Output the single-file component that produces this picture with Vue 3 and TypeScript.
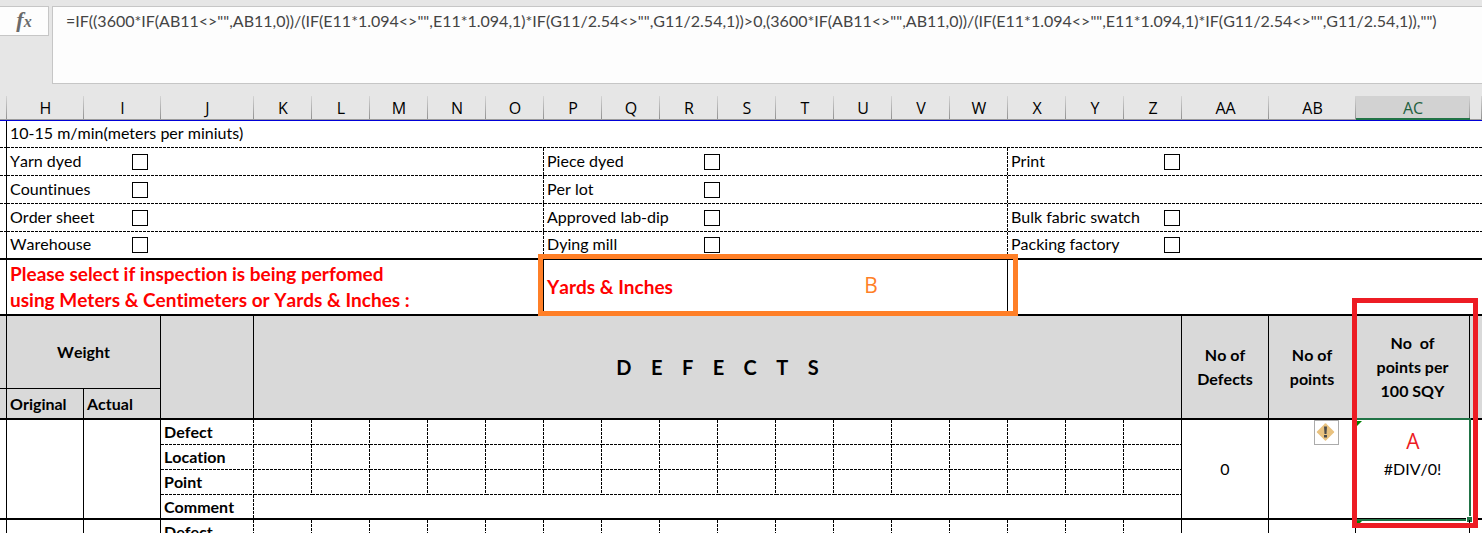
<script setup lang="ts">
interface Option {
  label: string
  checkbox: boolean
}

const formula =
  '=IF((3600*IF(AB11<>"",AB11,0))/(IF(E11*1.094<>"",E11*1.094,1)*IF(G11/2.54<>"",G11/2.54,1))>0,(3600*IF(AB11<>"",AB11,0))/(IF(E11*1.094<>"",E11*1.094,1)*IF(G11/2.54<>"",G11/2.54,1)),"")'

const narrow: string[] = 'KLMNOPQRSTUVWXYZ'.split('')
const columns: string[] = ['', 'H', 'I', 'J', ...narrow, 'AA', 'AB', 'AC', '']
const defectsTitle = 'DEFECTS'.split('').join('    ')
const pointsTitle = 'No  of\npoints per\n100 SQY'

const optionRows: Option[][] = [
  [
    { label: 'Yarn dyed', checkbox: true },
    { label: 'Piece dyed', checkbox: true },
    { label: 'Print', checkbox: true },
  ],
  [
    { label: 'Countinues', checkbox: true },
    { label: 'Per lot', checkbox: true },
    { label: '', checkbox: false },
  ],
  [
    { label: 'Order sheet', checkbox: true },
    { label: 'Approved lab-dip', checkbox: true },
    { label: 'Bulk fabric swatch', checkbox: true },
  ],
  [
    { label: 'Warehouse', checkbox: true },
    { label: 'Dying mill', checkbox: true },
    { label: 'Packing factory', checkbox: true },
  ],
]
const spans: number[] = [8, 8, 7]
</script>

<template>
  <main class="app">
    <header class="formula-bar">
      <button class="fx" type="button" aria-label="Insert function"><i>f</i><i class="x">x</i></button>
      <textarea class="formula" aria-label="Formula" wrap="off" spellcheck="false" :value="formula"></textarea>
    </header>

    <table class="sheet">
      <colgroup>
        <col class="c-edge" />
        <col class="c-weight" />
        <col class="c-weight" />
        <col class="c-name" />
        <col v-for="c in narrow" :key="c" class="c-narrow" />
        <col class="c-count" />
        <col class="c-count" />
        <col class="c-result" />
        <col />
      </colgroup>
      <thead>
        <tr class="letters">
          <th v-for="(c, i) in columns" :key="i" scope="col" :class="{ active: c === 'AC' }">{{ c }}</th>
        </tr>
      </thead>
      <tbody>
        <tr class="speed">
          <td class="db r"></td>
          <td class="db text" colspan="23">10-15 m/min(meters per miniuts)</td>
        </tr>
        <tr v-for="(row, r) in optionRows" :key="r" class="options">
          <td class="r" :class="r === 3 ? 'thick' : 'db'"></td>
          <td
            v-for="(o, i) in row"
            :key="i"
            :colspan="spans[i]"
            :class="[r === 3 ? (i < 2 ? 'thick dr' : 'thick') : i < 2 ? 'dbr' : 'db', 'group' + i]"
          >
            <div v-if="o.label" class="option">
              <label :for="`opt-${r}-${i}`">{{ o.label }}</label>
              <input v-if="o.checkbox" :id="`opt-${r}-${i}`" type="checkbox" />
            </div>
          </td>
        </tr>
        <tr class="units">
          <td class="r thick"></td>
          <td class="r thick question" colspan="8">
            Please select if inspection is being perfomed<br />using Meters &amp; Centimeters or Yards &amp; Inches :
          </td>
          <td class="r thick answer" colspan="8">
            Yards &amp; Inches
            <div class="mark orange"><span>B</span></div>
          </td>
          <td class="thick" colspan="7"></td>
        </tr>
        <tr class="head-top">
          <td class="r b grey"></td>
          <th class="r b grey" colspan="2">Weight</th>
          <td class="r thick grey" rowspan="2"></td>
          <th class="r thick grey defects" colspan="16" rowspan="2">{{ defectsTitle }}</th>
          <th class="r thick grey" rowspan="2">No of<br />Defects</th>
          <th class="r thick grey" rowspan="2">No of<br />points</th>
          <th class="r thick grey spaced" rowspan="2">{{ pointsTitle }}</th>
          <td class="thick grey" rowspan="2"></td>
        </tr>
        <tr class="head-bottom">
          <td class="r thick grey"></td>
          <th class="r thick grey left">Original</th>
          <th class="r thick grey left">Actual</th>
        </tr>
        <tr class="entry">
          <td class="r thick" rowspan="4"></td>
          <td class="r thick" rowspan="4"></td>
          <td class="r thick" rowspan="4"></td>
          <th class="dbr left" scope="row">Defect</th>
          <td v-for="c in narrow" :key="c" :class="c === 'Z' ? 'db r' : 'dbr'"></td>
          <td class="r thick value" rowspan="4">0</td>
          <td class="r thick value" rowspan="4">
            <button class="warning" type="button" aria-label="Error checking">
              <svg viewBox="0 0 23 23" width="23" height="23" aria-hidden="true">
                <path d="M10 2.5Q10.5 2 11 2.5L19 10.5Q19.5 11 19 11.5L11 19.5Q10.5 20 10 19.5L2 11.5Q1.5 11 2 10.5Z" fill="#e9c27f" />
                <path d="M9 5.5h3l-.5 7.5h-2zM9 14h3v2.5H9z" fill="#4b4b4b" />
              </svg>
            </button>
          </td>
          <td class="r thick value selected" rowspan="4">
            #DIV/0!
            <div class="selection"></div>
            <i class="flag"></i>
            <div class="mark red"><span>A</span></div>
          </td>
          <td class="thick" rowspan="4"></td>
        </tr>
        <tr v-for="name in ['Location', 'Point']" :key="name" class="entry">
          <th class="dbr left" scope="row">{{ name }}</th>
          <td v-for="c in narrow" :key="c" :class="c === 'Z' ? 'db r' : 'dbr'"></td>
        </tr>
        <tr class="entry">
          <th class="dr thick left" scope="row">Comment</th>
          <td class="r thick" colspan="16"></td>
        </tr>
        <tr class="entry">
          <td class="r"></td>
          <td class="r"></td>
          <td class="r"></td>
          <th class="dbr left" scope="row">Defect</th>
          <td v-for="c in narrow" :key="c" :class="c === 'Z' ? 'db r' : 'dbr'"></td>
          <td class="r"></td>
          <td class="r"></td>
          <td class="r next"><i class="flag"></i></td>
          <td></td>
        </tr>
      </tbody>
    </table>
  </main>
</template>

<style>
body {
  margin: 0;
  background: #fff;
}
</style>

<style scoped>
.app {
  height: 100vh;
  overflow: hidden;
  font-family: Lato, 'Liberation Sans', sans-serif;
  font-size: 16px;
  line-height: 24px;
  font-kerning: none;
  font-variant-ligatures: none;
  color: #000;
}
.formula-bar {
  display: flex;
  align-items: flex-start;
  gap: 3px;
  padding: 6px 0 12px;
  background: #e6e6e6;
}
.fx {
  box-sizing: border-box;
  width: 49px;
  height: 30px;
  padding: 0;
  border: 1px solid #c6c6c6;
  border-left: 0;
  background: #fdfdfd;
  color: #6a6a6a;
  font: bold 22px/26px 'Liberation Serif', serif;
}
.fx .x {
  font-size: 16px;
}
.formula {
  box-sizing: border-box;
  flex: 1;
  height: 78px;
  padding: 2px 13px;
  border: 1px solid #c6c6c6;
  border-right: 0;
  border-radius: 0;
  outline: 0;
  resize: none;
  overflow: hidden;
  white-space: pre;
  background: #fdfdfd;
  color: #444;
  font: 16px/24px Lato, 'Liberation Sans', sans-serif;
  font-kerning: none;
}
.sheet {
  width: 100%;
  table-layout: fixed;
  border-collapse: separate;
  border-spacing: 0;
}
.c-edge { width: 7px; }
.c-weight { width: 77px; }
.c-name { width: 93px; }
.c-narrow { width: 58px; }
.c-count { width: 87px; }
.c-result { width: 114px; }

th,
td {
  box-sizing: border-box;
  padding: 0;
  border: 0 solid #000;
  background-repeat: no-repeat;
}
.letters th {
  height: 25px;
  border-bottom: 1px solid #0000d8;
  background-color: #e6e6e6;
  background-image: linear-gradient(#9b9b9b, #9b9b9b), linear-gradient(#d4d4d4, #8f8f8f);
  background-size: 100% 1px, 1px 100%;
  background-position: bottom, right;
  font: 16px/22px 'Open Sans', 'Noto Sans', sans-serif;
}
.letters .active {
  background-color: #d2d2d2;
  background-image: linear-gradient(#217346, #217346), linear-gradient(#d4d4d4, #8f8f8f);
  background-size: 100% 2px, 1px 100%;
  color: #1e6040;
}
.speed { height: 27px; }
.options { height: 28px; }
.units { height: 56px; }
.head-top { height: 73px; }
.head-bottom { height: 31px; }
.entry { height: 25px; }

.r { border-right-width: 1px; }
.b { border-bottom-width: 1px; }
.thick { border-bottom-width: 2px; }
.grey { background-color: #d9d9d9; }
.db {
  background-image: repeating-linear-gradient(90deg, #000 0 3px, transparent 3px 4px);
  background-size: 100% 1px;
  background-position: bottom;
}
.dr {
  background-image: repeating-linear-gradient(#000 0 3px, transparent 3px 4px);
  background-size: 1px 100%;
  background-position: right;
}
.dbr {
  background-image:
    repeating-linear-gradient(90deg, #000 0 3px, transparent 3px 4px),
    repeating-linear-gradient(#000 0 3px, transparent 3px 4px);
  background-size: 100% 1px, 1px 100%;
  background-position: bottom, right;
}
.text,
.left {
  padding-left: 3px;
  text-align: left;
  line-height: 22px;
}
.text { padding-bottom: 3px; }
.dbr.left { padding-bottom: 1px; }
.option {
  display: flex;
  align-items: center;
  height: 26px;
  padding-left: 3px;
}
.option label {
  width: 122px;
  padding-bottom: 2px;
}
.group1 .option label { width: 157px; }
.group2 .option label { width: 153px; }
.option input {
  appearance: none;
  box-sizing: border-box;
  width: 16px;
  height: 16px;
  margin: 0;
  border: 1px solid #000;
  background: #fff;
}
.question,
.answer {
  padding-left: 3px;
  color: #f00;
  font-size: 19px;
  font-weight: bold;
  line-height: 26px;
}
.answer,
.selected,
.next,
.value {
  position: relative;
}
.mark {
  position: absolute;
  z-index: 2;
  box-sizing: border-box;
  display: flex;
  justify-content: center;
  border: 5px solid;
  font-family: 'Open Sans', 'Noto Sans', sans-serif;
  font-size: 21px;
  font-weight: 400;
}
.orange {
  inset: -6px -11px -2px -6px;
  align-items: center;
  padding-left: 186px;
  border-color: #ff7f27;
  color: #ff7f27;
}
.red {
  inset: -122px -9px -10px -4px;
  padding: 126px 4px 0 0;
  border-color: #ed1c24;
  color: #ed1c24;
}
.defects {
  font-size: 20px;
  white-space: pre;
}
.spaced { white-space: pre; }
.value { text-align: center; }
.warning {
  position: absolute;
  top: 0;
  right: 16px;
  width: 25px;
  height: 25px;
  padding: 0;
  border: 1px solid #ababab;
  background: #fff;
}
.warning svg { display: block; }
.selection {
  position: absolute;
  inset: -2px -2px -3px;
  border: 2px solid #217346;
}
.selection::after {
  content: '';
  position: absolute;
  right: -4px;
  bottom: -4px;
  width: 5px;
  height: 5px;
  border: 1px solid #fff;
  background: #217346;
}
.flag {
  position: absolute;
  top: 1px;
  left: 1px;
  border-top: 5px solid #008000;
  border-right: 5px solid transparent;
}
</style>
